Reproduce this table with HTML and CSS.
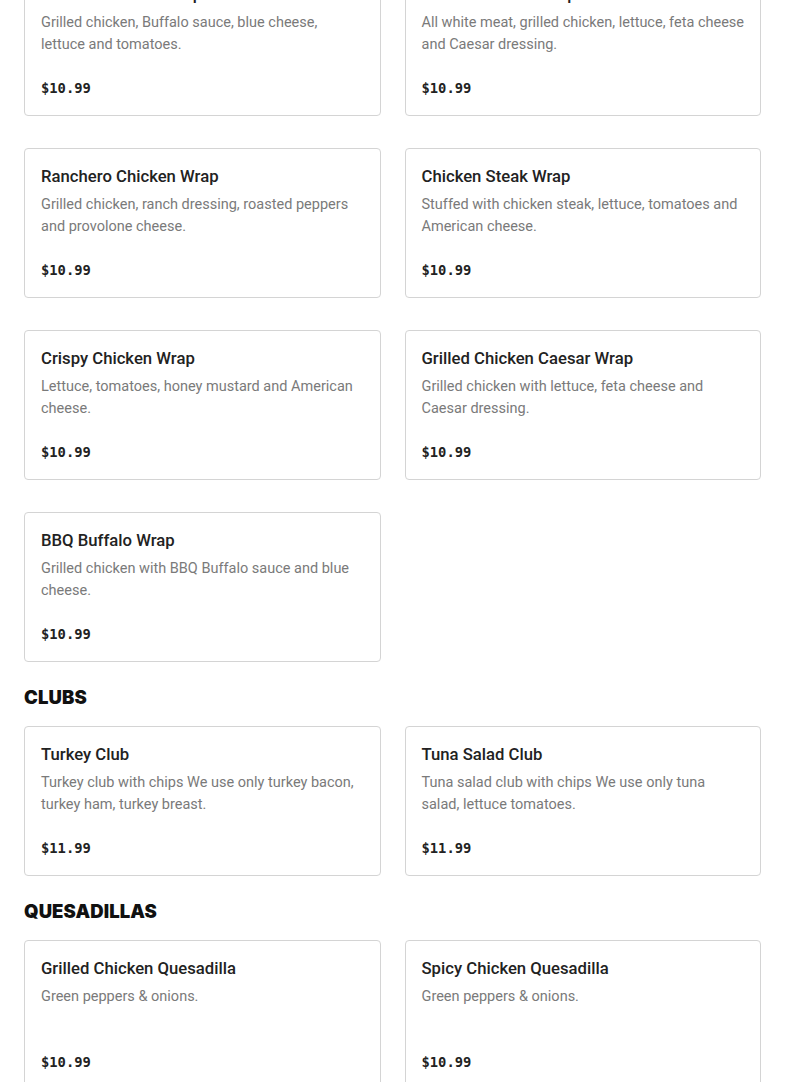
FILE: index.html
```html
<!DOCTYPE html>
<html lang="en">
<head>
<meta charset="utf-8">
<title>Menu</title>
<link rel="stylesheet" href="styles.css">
</head>
<body>
<main class="menu">
  <section class="section section-first">
    <div class="grid">
      <article class="card">
        <h3 class="item-name">Buffalo Chicken Wrap</h3>
        <p class="item-desc">Grilled chicken, Buffalo sauce, blue cheese, lettuce and tomatoes.</p>
        <p class="item-price">$10.99</p>
      </article>
      <article class="card">
        <h3 class="item-name">Grilled Chicken Wrap</h3>
        <p class="item-desc">All white meat, grilled chicken, lettuce, feta cheese and Caesar dressing.</p>
        <p class="item-price">$10.99</p>
      </article>
      <article class="card">
        <h3 class="item-name">Ranchero Chicken Wrap</h3>
        <p class="item-desc">Grilled chicken, ranch dressing, roasted peppers and provolone cheese.</p>
        <p class="item-price">$10.99</p>
      </article>
      <article class="card">
        <h3 class="item-name">Chicken Steak Wrap</h3>
        <p class="item-desc">Stuffed with chicken steak, lettuce, tomatoes and American cheese.</p>
        <p class="item-price">$10.99</p>
      </article>
      <article class="card">
        <h3 class="item-name">Crispy Chicken Wrap</h3>
        <p class="item-desc">Lettuce, tomatoes, honey mustard and American cheese.</p>
        <p class="item-price">$10.99</p>
      </article>
      <article class="card">
        <h3 class="item-name">Grilled Chicken Caesar Wrap</h3>
        <p class="item-desc">Grilled chicken with lettuce, feta cheese and Caesar dressing.</p>
        <p class="item-price">$10.99</p>
      </article>
      <article class="card">
        <h3 class="item-name">BBQ Buffalo Wrap</h3>
        <p class="item-desc">Grilled chicken with BBQ Buffalo sauce and blue cheese.</p>
        <p class="item-price">$10.99</p>
      </article>
    </div>
  </section>

  <section class="section">
    <h2 class="section-title">CLUBS</h2>
    <div class="grid">
      <article class="card">
        <h3 class="item-name">Turkey Club</h3>
        <p class="item-desc">Turkey club with chips We use only turkey bacon, turkey ham, turkey breast.</p>
        <p class="item-price">$11.99</p>
      </article>
      <article class="card">
        <h3 class="item-name">Tuna Salad Club</h3>
        <p class="item-desc">Tuna salad club with chips We use only tuna salad, lettuce tomatoes.</p>
        <p class="item-price">$11.99</p>
      </article>
    </div>
  </section>

  <section class="section">
    <h2 class="section-title">QUESADILLAS</h2>
    <div class="grid">
      <article class="card">
        <h3 class="item-name">Grilled Chicken Quesadilla</h3>
        <p class="item-desc">Green peppers &amp; onions.</p>
        <p class="item-price">$10.99</p>
      </article>
      <article class="card">
        <h3 class="item-name">Spicy Chicken Quesadilla</h3>
        <p class="item-desc">Green peppers &amp; onions.</p>
        <p class="item-price">$10.99</p>
      </article>
    </div>
  </section>
</main>
</body>
</html>
```

FILE: styles.css
```css
* {
  box-sizing: border-box;
}

html, body {
  margin: 0;
  padding: 0;
  background: #ffffff;
}

body {
  font-family: Roboto, "Noto Sans", "Liberation Sans", sans-serif;
  color: #222222;
}

.menu {
  padding: 0 24px 40px;
  margin-top: -34px;
}

.section {
  margin-top: 23px;
}

.section-first {
  margin-top: 0;
}

.section-title {
  margin: 0 0 17px;
  font-family: Inter, "Liberation Sans", sans-serif;
  font-weight: 900;
  font-size: 18.5px;
  line-height: 24px;
  letter-spacing: 0.1px;
  color: #111111;
}

.grid {
  display: grid;
  grid-template-columns: 1fr 1fr;
  column-gap: 24px;
  row-gap: 32px;
}

.card {
  border: 1px solid #d4d4d4;
  border-radius: 4px;
  padding: 16px 16px 16px;
  background: #ffffff;
}

.item-name {
  margin: 0;
  font-size: 16.7px;
  font-weight: 500;
  line-height: 24px;
  color: #222222;
}

.item-desc {
  margin: 5px 0 0;
  min-height: 44px;
  font-size: 14.5px;
  line-height: 22px;
  color: #7a7a7a;
}

.item-price {
  margin: 21px 0 0;
  font-family: "DejaVu Sans Mono", "Liberation Mono", monospace;
  font-weight: 700;
  font-size: 13.8px;
  line-height: 22px;
  color: #222222;
}
```
